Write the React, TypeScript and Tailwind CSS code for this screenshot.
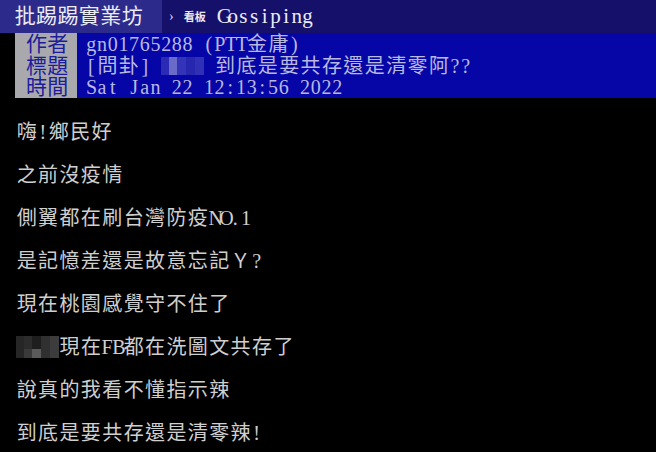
import React from "react";

const isWide = (c: string) =>
  /[\u2E80-\u9FFF\uF900-\uFAFF\uFF01-\uFF60\u3000-\u303F]/.test(c);

function T({ text }: { text: string }) {
  return (
    <>
      {Array.from(text).map((c, i) =>
        isWide(c) ? (
          <span key={i} className="inline-block w-[21.4px] text-center">
            {c}
          </span>
        ) : (
          <span key={i} className="inline-block w-[10.7px] text-center">
            {c === " " ? "\u00A0" : c}
          </span>
        )
      )}
    </>
  );
}

function TitleBlur() {
  return (
    <span className="inline-flex h-[18px] w-[42.8px] align-[-2px]">
      <span className="h-full w-[8px] bg-[#2a2ab4]" />
      <span className="h-full w-[8px] bg-[#6a6ac8]" />
      <span className="h-full w-[9px] bg-[#3434b8]" />
      <span className="h-full w-[9px] bg-[#2626ae]" />
      <span className="h-full w-[8.8px] bg-[#3030b6]" />
    </span>
  );
}

function BodyBlur() {
  return (
    <span className="inline-flex h-[22px] w-[42.8px] align-[-4px]">
      <span className="h-full w-[8px] bg-[#262626]" />
      <span className="flex h-full w-[8px] flex-col">
        <span className="h-[13px] bg-[#2c2c2c]" />
        <span className="flex-1 bg-[#3a3a3a]" />
      </span>
      <span className="flex h-full w-[9px] flex-col">
        <span className="h-[13px] bg-[#1e1e1e]" />
        <span className="flex-1 bg-[#5a5a5a]" />
      </span>
      <span className="h-full w-[9px] bg-[#303030]" />
      <span className="h-full w-[8.8px] bg-[#3c3c3c]" />
    </span>
  );
}

const font = "font-['Liberation_Serif','Noto_Sans_CJK_TC',serif]";

export default function App() {
  const lines: React.ReactNode[] = [
    <T text="嗨!鄉民好" />,
    <T text="之前沒疫情" />,
    <T text="側翼都在刷台灣防疫NO.1" />,
    <T text="是記憶差還是故意忘記Ｙ?" />,
    <T text="現在桃園感覺守不住了" />,
    <>
      <BodyBlur />
      <T text="現在FB都在洗圖文共存了" />
    </>,
    <T text="說真的我看不懂指示辣" />,
    <T text="到底是要共存還是清零辣!" />,
  ];

  return (
    <div className={`h-[452px] w-[656px] overflow-hidden bg-black ${font} text-[20px]`}>
      {/* top bar */}
      <div className="flex h-[33px] items-center bg-[#15106a] text-[#ececf4]">
        <div className="flex h-full w-[162px] items-center bg-[#2c2b8c] pl-[14.5px] text-[21px] leading-none">
          <T text="批踢踢實業坊" />
        </div>
        <span className="ml-[7px] text-[14px] leading-none text-[#d8d8ec]">›</span>
        <span className="ml-[10px] font-['Noto_Sans_CJK_TC',sans-serif] text-[11px] font-bold leading-none text-[#e8e8f2]">
          看板
        </span>
        <span className="ml-[11px] text-[21px] leading-none">
          <T text="Gossiping" />
        </span>
      </div>

      {/* header meta */}
      <div className="flex">
        <div className="w-[15px]" />
        <div className="w-[62px] bg-[#a9a9ad] text-[21px] text-[#1c1c9c]">
          <div className="h-[22px] leading-[22px]"><T text=" 作者" /></div>
          <div className="h-[22px] leading-[22px]"><T text=" 標題" /></div>
          <div className="h-[21px] leading-[21px]"><T text=" 時間" /></div>
        </div>
        <div className="flex-1 bg-[#0606a6] pl-[9px] text-[20px] text-[#b8b8e0]">
          <div className="h-[22px] leading-[22px]"><T text="gn01765288 (PTT金庸)" /></div>
          <div className="h-[22px] leading-[22px] whitespace-nowrap">
            <T text="[問卦] " />
            <TitleBlur />
            <T text=" 到底是要共存還是清零阿??" />
          </div>
          <div className="h-[21px] leading-[21px]"><T text="Sat Jan 22 12:13:56 2022" /></div>
        </div>
      </div>

      {/* body */}
      <div className="flex flex-col pl-[16px] pt-[14px] text-[#cfcfcf]">
        {lines.map((l, i) => (
          <div key={i} className="h-[43px] whitespace-nowrap leading-[41px]">
            {l}
          </div>
        ))}
      </div>
    </div>
  );
}
